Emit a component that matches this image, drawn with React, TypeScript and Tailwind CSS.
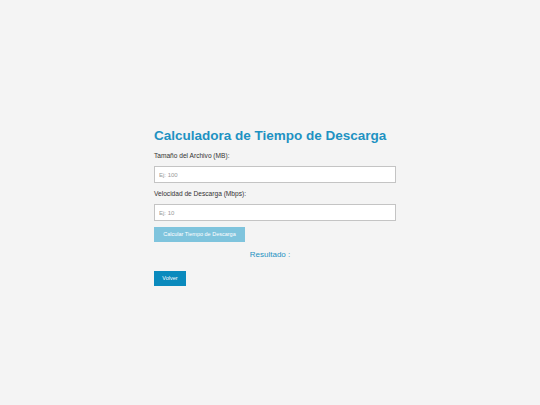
export default function App() {
  return (
    <div
      className="min-h-screen w-full bg-[#f4f4f4] flex justify-center pt-[126px]"
      style={{ fontFamily: '"Liberation Sans", Arial, sans-serif' }}
    >
      <div className="w-[252px] px-[10px]">
        <h1 className="text-[13.5px] leading-[20px] font-bold text-[#1e92c2] whitespace-nowrap">
          Calculadora de Tiempo de Descarga
        </h1>
        <label className="block mt-[5px] text-[6.6px] leading-[9px] text-[#333]">
          Tamaño del Archivo (MB):
        </label>
        <input
          placeholder="Ej: 100"
          className="block mt-[6px] w-[242px] h-[17px] px-[4px] bg-white border border-[#c4c4c4] text-[6px] placeholder:text-[#999] outline-none"
        />
        <label className="block mt-[6px] text-[6.6px] leading-[9px] text-[#333]">
          Velocidad de Descarga (Mbps):
        </label>
        <input
          placeholder="Ej: 10"
          className="block mt-[6px] w-[242px] h-[17px] px-[4px] bg-white border border-[#c4c4c4] text-[6px] placeholder:text-[#999] outline-none"
        />
        <button
          disabled
          className="block mt-[6px] w-[91px] h-[15px] bg-[#7fc4dd] text-white text-[5.5px]"
        >
          Calcular Tiempo de Descarga
        </button>
        <p className="mt-[7px] text-center text-[8px] leading-[11px] text-[#1e92c2]">
          Resultado :
        </p>
        <button className="block mt-[11px] w-[32px] h-[15px] bg-[#0a8abd] text-white text-[5.5px]">
          Volver
        </button>
      </div>
    </div>
  );
}
